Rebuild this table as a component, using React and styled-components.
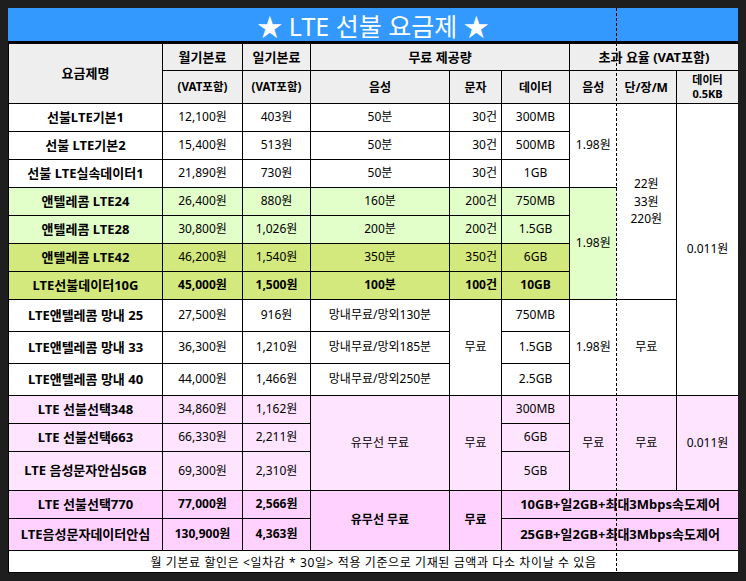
import React from 'react';
import styled, { createGlobalStyle } from 'styled-components';

const tones = {
	white: '#ffffff',
	lime: '#e2fec9',
	green: '#d3e97e',
	pink: '#ffe4ff',
	rose: '#ffd1ff',
	head: '#eeeeee',
};

const GlobalStyle = createGlobalStyle`
	body {
		margin: 8px;
		background: #1e1e1e;
		font-family: "Noto Sans", "Noto Sans CJK KR", sans-serif;
		color: #000;
	}
`;

const Sheet = styled.div`
	position: relative;
	width: 730px;
`;

const Title = styled.div`
	height: 33px;
	display: flex;
	align-items: center;
	justify-content: center;
	background: #3399ff;
	color: #fff;
	font-size: 25px;
	font-weight: 400;
	border-bottom: 2px solid #000;
`;

const Table = styled.table`
	width: 730px;
	border-collapse: collapse;
	table-layout: fixed;
	background: #fff;
`;

const Row = styled.tr`
	height: ${(p) => p.$h}px;
`;

const Head = styled.th`
	background: ${tones.head};
	border: 1px solid #000;
	font-size: ${(p) => p.$size || 13}px;
	font-weight: 700;
	line-height: 1.25;
	padding: 0;
	text-align: center;
	vertical-align: middle;
	${(p) => p.$dash && 'border-right-style: hidden;'}
`;

const Cell = styled.td`
	background: ${(p) => tones[p.$tone || 'white']};
	border: 1px solid #000;
	font-size: ${(p) => p.$size || 12}px;
	font-weight: ${(p) => (p.$bold ? 700 : 400)};
	line-height: ${(p) => p.$lh || 1.2};
	padding: 0 ${(p) => (p.$align === 'right' ? 4 : 2)}px 0 2px;
	text-align: ${(p) => p.$align || 'center'};
	vertical-align: middle;
	white-space: nowrap;
	${(p) => p.$dash && 'border-right-style: hidden;'}
`;

const Name = styled(Cell)`
	font-size: 13px;
	font-weight: 700;
`;

const Note = styled.td`
	background: #fff;
	border: 1px solid #000;
	font-size: 12px;
	letter-spacing: 0.6px;
	text-align: center;
	vertical-align: middle;
	padding: 0;
`;

const DashLine = styled.div`
	position: absolute;
	top: 0;
	bottom: 0;
	left: 608px;
	width: 1px;
	background: repeating-linear-gradient(to bottom, #000 0 3px, transparent 3px 5px);
	pointer-events: none;
`;

const widths = [154, 80, 68, 139, 52, 68, 47, 60, 62];

export default function App() {
	return (
		<Sheet>
			<GlobalStyle />
			<Title>★ LTE 선불 요금제 ★</Title>
			<Table>
				<colgroup>
					{widths.map((w, i) => (
						<col key={i} style={{ width: w }} />
					))}
				</colgroup>
				<tbody>
					<Row $h={27}>
						<Head rowSpan={2}>요금제명</Head>
						<Head>월기본료</Head>
						<Head>일기본료</Head>
						<Head colSpan={3}>무료 제공량</Head>
						<Head colSpan={3}>초과 요율 (VAT포함)</Head>
					</Row>
					<Row $h={33}>
						<Head $size={11.5}>(VAT포함)</Head>
						<Head $size={11.5}>(VAT포함)</Head>
						<Head $size={12}>음성</Head>
						<Head $size={12}>문자</Head>
						<Head $size={12}>데이터</Head>
						<Head $size={12} $dash>음성</Head>
						<Head $size={12}>단/장/M</Head>
						<Head $size={11}>데이터<br />0.5KB</Head>
					</Row>

					<Row $h={28}>
						<Name>선불LTE기본1</Name>
						<Cell>12,100원</Cell>
						<Cell>403원</Cell>
						<Cell>50분</Cell>
						<Cell $align="right">30건</Cell>
						<Cell>300MB</Cell>
						<Cell rowSpan={3} $dash>1.98원</Cell>
						<Cell rowSpan={7} $lh={1.45}>22원<br />33원<br />220원</Cell>
						<Cell rowSpan={10}>0.011원</Cell>
					</Row>
					<Row $h={28}>
						<Name>선불 LTE기본2</Name>
						<Cell>15,400원</Cell>
						<Cell>513원</Cell>
						<Cell>50분</Cell>
						<Cell $align="right">30건</Cell>
						<Cell>500MB</Cell>
					</Row>
					<Row $h={28}>
						<Name>선불 LTE실속데이터1</Name>
						<Cell>21,890원</Cell>
						<Cell>730원</Cell>
						<Cell>50분</Cell>
						<Cell $align="right">30건</Cell>
						<Cell>1GB</Cell>
					</Row>
					<Row $h={28}>
						<Name $tone="lime">앤텔레콤 LTE24</Name>
						<Cell $tone="lime">26,400원</Cell>
						<Cell $tone="lime">880원</Cell>
						<Cell $tone="lime">160분</Cell>
						<Cell $tone="lime" $align="right">200건</Cell>
						<Cell $tone="lime">750MB</Cell>
						<Cell $tone="lime" rowSpan={4} $dash>1.98원</Cell>
					</Row>
					<Row $h={28}>
						<Name $tone="lime">앤텔레콤 LTE28</Name>
						<Cell $tone="lime">30,800원</Cell>
						<Cell $tone="lime">1,026원</Cell>
						<Cell $tone="lime">200분</Cell>
						<Cell $tone="lime" $align="right">200건</Cell>
						<Cell $tone="lime">1.5GB</Cell>
					</Row>
					<Row $h={28}>
						<Name $tone="green">앤텔레콤 LTE42</Name>
						<Cell $tone="green">46,200원</Cell>
						<Cell $tone="green">1,540원</Cell>
						<Cell $tone="green">350분</Cell>
						<Cell $tone="green" $align="right">350건</Cell>
						<Cell $tone="green">6GB</Cell>
					</Row>
					<Row $h={28}>
						<Name $tone="green">LTE선불데이터10G</Name>
						<Cell $tone="green" $bold>45,000원</Cell>
						<Cell $tone="green" $bold>1,500원</Cell>
						<Cell $tone="green" $bold>100분</Cell>
						<Cell $tone="green" $bold $align="right">100건</Cell>
						<Cell $tone="green" $bold>10GB</Cell>
					</Row>

					<Row $h={32}>
						<Name>LTE앤텔레콤 망내 25</Name>
						<Cell>27,500원</Cell>
						<Cell>916원</Cell>
						<Cell>망내무료/망외130분</Cell>
						<Cell rowSpan={3}>무료</Cell>
						<Cell>750MB</Cell>
						<Cell rowSpan={3} $dash>1.98원</Cell>
						<Cell rowSpan={3}>무료</Cell>
					</Row>
					<Row $h={32}>
						<Name>LTE앤텔레콤 망내 33</Name>
						<Cell>36,300원</Cell>
						<Cell>1,210원</Cell>
						<Cell>망내무료/망외185분</Cell>
						<Cell>1.5GB</Cell>
					</Row>
					<Row $h={32}>
						<Name>LTE앤텔레콤 망내 40</Name>
						<Cell>44,000원</Cell>
						<Cell>1,466원</Cell>
						<Cell>망내무료/망외250분</Cell>
						<Cell>2.5GB</Cell>
					</Row>

					<Row $h={28}>
						<Name $tone="pink">LTE 선불선택348</Name>
						<Cell $tone="pink">34,860원</Cell>
						<Cell $tone="pink">1,162원</Cell>
						<Cell $tone="pink" rowSpan={3}>유무선 무료</Cell>
						<Cell $tone="pink" rowSpan={3}>무료</Cell>
						<Cell $tone="pink">300MB</Cell>
						<Cell $tone="pink" rowSpan={3} $dash>무료</Cell>
						<Cell $tone="pink" rowSpan={3}>무료</Cell>
						<Cell $tone="pink" rowSpan={3}>0.011원</Cell>
					</Row>
					<Row $h={28}>
						<Name $tone="pink">LTE 선불선택663</Name>
						<Cell $tone="pink">66,330원</Cell>
						<Cell $tone="pink">2,211원</Cell>
						<Cell $tone="pink">6GB</Cell>
					</Row>
					<Row $h={39}>
						<Name $tone="pink">LTE 음성문자안심5GB</Name>
						<Cell $tone="pink">69,300원</Cell>
						<Cell $tone="pink">2,310원</Cell>
						<Cell $tone="pink">5GB</Cell>
					</Row>

					<Row $h={28}>
						<Name $tone="rose">LTE 선불선택770</Name>
						<Cell $tone="rose" $bold>77,000원</Cell>
						<Cell $tone="rose" $bold>2,566원</Cell>
						<Cell $tone="rose" $bold rowSpan={2}>유무선 무료</Cell>
						<Cell $tone="rose" $bold rowSpan={2}>무료</Cell>
						<Cell $tone="rose" $bold $size={13} colSpan={4}>10GB+일2GB+최대3Mbps속도제어</Cell>
					</Row>
					<Row $h={32}>
						<Name $tone="rose">LTE음성문자데이터안심</Name>
						<Cell $tone="rose" $bold>130,900원</Cell>
						<Cell $tone="rose" $bold>4,363원</Cell>
						<Cell $tone="rose" $bold $size={13} colSpan={4}>25GB+일2GB+최대3Mbps속도제어</Cell>
					</Row>

					<Row $h={22}>
						<Note colSpan={9}>월 기본료 할인은 &lt;일차감 * 30일&gt; 적용 기준으로 기재된 금액과 다소 차이날 수 있음</Note>
					</Row>
				</tbody>
			</Table>
			<DashLine />
		</Sheet>
	);
}
